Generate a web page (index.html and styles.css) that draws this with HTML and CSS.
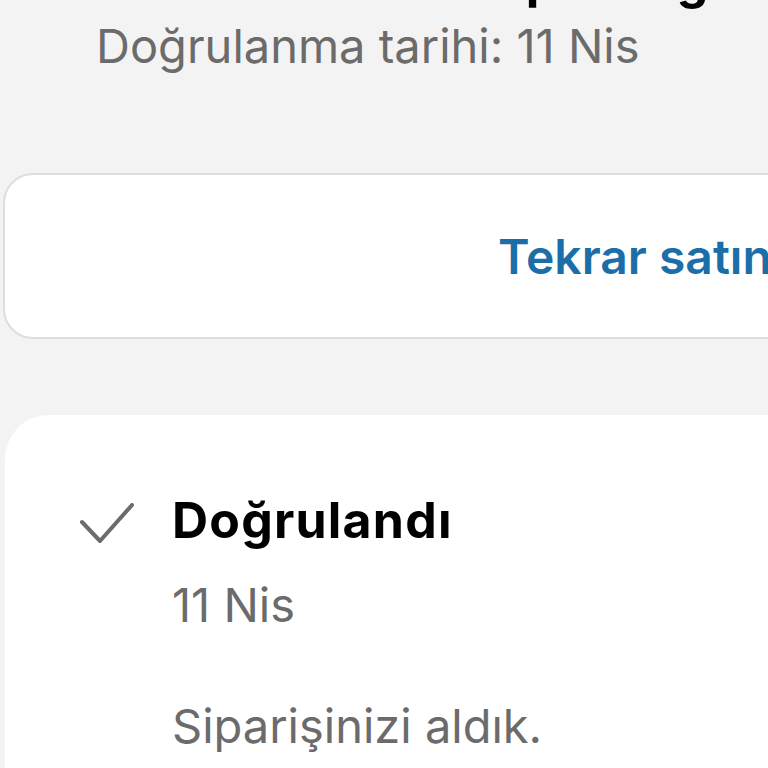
FILE: index.html
```html
<!DOCTYPE html>
<html lang="tr">
<head>
<meta charset="utf-8">
<link rel="stylesheet" href="styles.css">
</head>
<body>
<div class="page">
  <section class="summary">
    <div class="title">Tahmini teslimat: pazar günü</div>
    <div class="subtitle">Doğrulanma tarihi: 11 Nis</div>
  </section>
  <div class="buy-again">
    <span class="buy-again-label">Tekrar satın al</span>
  </div>
  <section class="timeline">
    <div class="step">
      <svg class="check" viewBox="0 0 60 44" width="60" height="44" aria-hidden="true">
        <polyline points="3,19 21,38 53,2" fill="none" stroke="#6c6c6c" stroke-width="4" stroke-linecap="round" stroke-linejoin="round"/>
      </svg>
      <div class="step-body">
        <div class="step-title">Doğrulandı</div>
        <div class="step-date">11 Nis</div>
        <div class="step-text">Siparişinizi aldık.</div>
      </div>
    </div>
  </section>
</div>
</body>
</html>
```

FILE: styles.css
```css
html, body {
  margin: 0;
  padding: 0;
  background: #f3f3f3;
  overflow: hidden;
  width: 768px;
  height: 768px;
}
.page {
  font-family: Inter, "Noto Sans", sans-serif;
  display: flex;
  flex-direction: column;
  width: 1400px;
}
.summary {
  padding-left: 96px;
  margin-top: -49px;
}
.title {
  font-size: 50px;
  font-weight: 700;
  color: #000;
  line-height: 58px;
}
.subtitle {
  font-size: 47px;
  color: #6b6b6b;
  line-height: 74px;
}
.buy-again {
  margin-top: 90px;
  margin-left: 3px;
  width: 1316px;
  height: 166px;
  box-sizing: border-box;
  border: 2px solid #dddddd;
  border-radius: 30px;
  background: #fff;
  display: flex;
  align-items: center;
  justify-content: center;
}
.buy-again-label {
  font-size: 48px;
  font-weight: 600;
  color: #1b6ea8;
}
.timeline {
  margin-top: 76px;
  margin-left: 5px;
  background: #fff;
  border-radius: 44px;
  height: 500px;
  padding: 69px 0 0 74px;
}
.step {
  display: flex;
  gap: 33px;
}
.check {
  margin-top: 19px;
  flex: none;
}
.step-body {
  display: flex;
  flex-direction: column;
}
.step-title {
  font-size: 50px;
  font-weight: 700;
  color: #000;
  line-height: 72px;
  letter-spacing: 1.2px;
}
.step-date {
  font-size: 47px;
  color: #6b6b6b;
  line-height: 98px;
}
.step-text {
  margin-top: 40px;
  font-size: 47px;
  color: #6b6b6b;
  line-height: 64px;
}
```
